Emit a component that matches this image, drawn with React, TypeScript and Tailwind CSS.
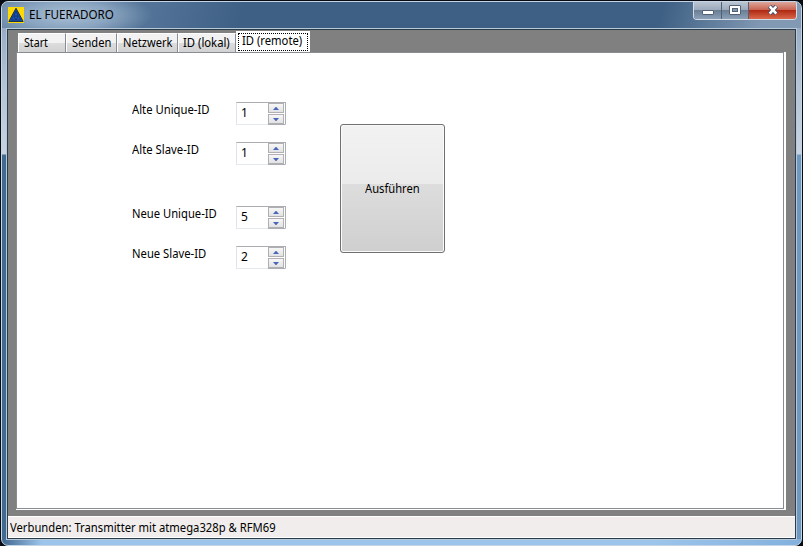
import React, { useLayoutEffect, useRef, useState } from "react";

// Caption set to a nominal pixel width: the text is measured once and condensed to fit.
function Label({ text, width, className = "" }: { text: string; width: number; className?: string }) {
  const ref = useRef<HTMLSpanElement>(null);
  const [scale, setScale] = useState(1);
  useLayoutEffect(() => {
    if (ref.current) setScale(width / ref.current.offsetWidth);
  }, [width]);
  return (
    <span className={`block h-[18px] shrink-0 text-xs leading-[18px] whitespace-nowrap text-black ${className}`} style={{ width }}>
      <span ref={ref} className="inline-block origin-left" style={{ transform: `scaleX(${scale})` }}>{text}</span>
    </span>
  );
}

function Arrow({ down = false }: { down?: boolean }) {
  return (
    <span className="flex h-[10px] w-4 shrink-0 items-start justify-center border border-[#b0b0b4] bg-linear-to-b from-[#f7f7f7] to-[#e2e2e4] pt-[3px]">
      <svg className="block shrink-0" width="6" height="3" viewBox="0 0 6 3">
        <path d={down ? "M0 0h6L3 3.4z" : "M3-.4l3 3.4H0z"} fill="#4a66b8" />
      </svg>
    </span>
  );
}

function Row({ text, width, value, className = "" }: { text: string; width: number; value: string; className?: string }) {
  return (
    <div className={`flex h-10 ${className}`}>
      <div className="w-[104px]"><Label text={text} width={width} className="-mt-px" /></div>
      <div className="flex h-[23px] w-[50px] justify-between border border-t-[#abadb3] border-r-[#abadb3] border-b-[#e3e9ef] border-l-[#e2e3ea] bg-white pl-1">
        <Label text={value} width={7} className="mt-px" />
        <div className="-mb-px flex flex-col gap-px border-b border-[#abadb3] pr-px"><Arrow /><Arrow down /></div>
      </div>
    </div>
  );
}

const tabs = [
  { text: "Start", tw: 24, cls: "w-12 pl-[5px]" },
  { text: "Senden", tw: 39, cls: "w-[51px] pl-[5px]" },
  { text: "Netzwerk", tw: 49, cls: "w-[61px] pl-[5px]" },
  { text: "ID (lokal)", tw: 47, cls: "w-[58px] pl-[4px]" },
];

export default function App() {
  return (
    <div className="h-[546px] w-[803px] overflow-hidden bg-[#080b12] px-px pt-px font-['Noto_Sans','Open_Sans',sans-serif]">
      <div className="flex h-[545px] flex-col overflow-hidden rounded-[7px] border border-[#c5d5e5] bg-[linear-gradient(to_right,#41678e_0px,#9dc5eb_40px,#9dc5eb_650px,#82b0dd_800px),linear-gradient(to_bottom,#8aa1bb_0px,#b3c3d6_80px,#c7d3e1_152px,transparent_153px),linear-gradient(to_right,#426990_50%,#6f98c1_50%)] bg-[position:0_537px,0_0,0_0] bg-no-repeat">
        <div className="flex h-[26px] shrink-0 justify-between bg-[radial-gradient(ellipse_85px_26px_at_65px_13px,#a9bfd4_0%,#8aa5c1_50%,transparent_100%),linear-gradient(105deg,#64829f_0px,#527397_150px,#3e6084_235px,#3e6084_640px,#8199b3_740px)] pl-[6px]">
          <div className="flex gap-[5px] pt-[5px]">
            <svg className="block" width="16" height="16" viewBox="0 0 16 16">
              <path fill="#ffd900" d="M0 0h16v16H0z" />
              <path d="M8 1.2 15.2 14.5H.8z" fill="#1c55b5" stroke="#102448" strokeWidth=".9" />
              <path d="m8 4-4.6 9h9.2zM6 9h4l-2 4z" fill="none" stroke="#102d69" strokeWidth=".8" />
            </svg>
            <Label text="EL FUERADORO" width={85} className="-mt-px" />
          </div>
          <div className="mr-[4px] flex h-[18px] w-[104px] overflow-hidden rounded-b-[4px] border border-t-0 border-[#d1dce7]">
            <div className="flex w-7 justify-center border-r border-[#4d6177] bg-[linear-gradient(#bac5d2,#9aa9bb_48%,#6a7e96_50%,#8ca1b8)] pt-2"><span className="h-[5px] w-3 rounded-[1px] border border-[#536176] bg-white" /></div>
            <div className="flex w-[27px] justify-center border-r border-[#4d6177] bg-[linear-gradient(#bac5d2,#9aa9bb_48%,#6a7e96_50%,#8ca1b8)] pt-[3px]"><span className="flex h-[10px] w-3 items-center justify-center rounded-[1px] border border-[#536176] bg-white"><span className="h-1 w-[6px] border border-[#536176] bg-[#8497ad]" /></span></div>
            <div className="flex flex-1 justify-center bg-[linear-gradient(#dda79c,#c8604e_48%,#b02a14_50%,#d9684b)] pt-[3px]"><svg className="block" width="12" height="10" viewBox="0 0 12 10"><path d="m2.5 1.2 7 7.6m0-7.6-7 7.6" stroke="#4b5265" strokeWidth="4.4" /><path d="m2.7 1.3 6.6 7.4m0-7.4-6.6 7.4" stroke="#fff" strokeWidth="2.5" /></svg></div>
          </div>
        </div>
        <div className="mx-[4px] flex h-[512px] shrink-0 flex-col border border-[#b9c9d8]">
          <div className="flex h-[510px] flex-col border border-[#293c4b] bg-[#808080]">
            <div className="flex h-[22px] shrink-0 items-end pl-[10px]">
              {tabs.map((t) => (
                <div key={t.text} className={`h-[19px] border border-b-0 border-t-white border-r-[#898c95] border-l-white bg-[linear-gradient(#f2f2f2_50%,#dddddd_50%,#d2d2d2)] ${t.cls}`}><Label text={t.text} width={t.tw} /></div>
              ))}
              <div className="h-[21px] w-[74px] bg-white px-[2px] pt-[2px]"><div className="h-[18px] border border-dotted border-black pl-[3px]"><Label text="ID (remote)" width={60} className="-mt-[2px]" /></div></div>
            </div>
            <div className="mr-[9px] ml-2 flex h-[458px] shrink-0 border-r-2 border-b border-white">
              <div className="flex flex-1 border border-[#898c95] bg-white pt-[49px] pl-[115px]">
                <div className="w-[208px]">
                  <Row text="Alte Unique-ID" width={78} value="1" />
                  <Row text="Alte Slave-ID" width={67} value="1" />
                  <Row text="Neue Unique-ID" width={85} value="5" className="mt-6" />
                  <Row text="Neue Slave-ID" width={74} value="2" />
                </div>
                <button className="mt-[22px] flex h-[129px] w-[105px] items-center justify-center rounded-[3px] border border-[#707070] bg-[linear-gradient(#f2f2f2,#ebebeb_46.5%,#dddddd_46.5%,#cfcfcf)] shadow-[inset_0_0_0_1px_#fafafa]"><Label text="Ausführen" width={55} className="text-left" /></button>
              </div>
            </div>
            <div className="mt-[6px] h-[22px] shrink-0 border-y border-white bg-[#f0edec] pt-[2px] pl-[2px]"><Label text="Verbunden: Transmitter mit atmega328p & RFM69" width={266} /></div>
          </div>
        </div>
      </div>
    </div>
  );
}
